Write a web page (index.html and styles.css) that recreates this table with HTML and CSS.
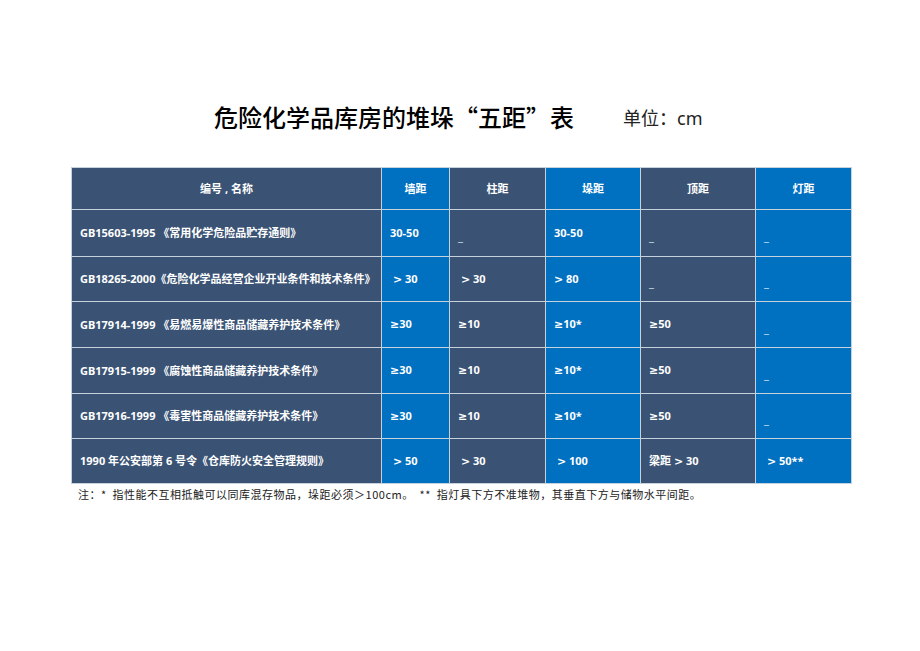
FILE: index.html
```html
<!DOCTYPE html>
<html lang="zh-CN">
<head>
<meta charset="utf-8">
<title>危险化学品库房的堆垛“五距”表</title>
<link rel="stylesheet" href="styles.css">
</head>
<body>
<div class="page">
  <div class="heading">
    <h1 class="title">危险化学品库房的堆垛“五距”表</h1>
    <span class="unit">单位：cm</span>
  </div>
  <table class="grid">
    <colgroup>
      <col class="c1"><col class="c2"><col class="c3"><col class="c4"><col class="c5"><col class="c6">
    </colgroup>
    <thead>
      <tr class="hrow">
        <th class="dark">编号 , 名称</th>
        <th class="blue">墙距</th>
        <th class="dark">柱距</th>
        <th class="blue">垛距</th>
        <th class="dark">顶距</th>
        <th class="blue">灯距</th>
      </tr>
    </thead>
    <tbody>
      <tr class="r47">
        <td class="dark">GB15603-1995 《常用化学危险品贮存通则》</td>
        <td class="blue">30-50</td>
        <td class="dark"><span class="dash">_</span></td>
        <td class="blue">30-50</td>
        <td class="dark"><span class="dash">_</span></td>
        <td class="blue"><span class="dash">_</span></td>
      </tr>
      <tr class="r45">
        <td class="dark">GB18265-2000《危险化学品经营企业开业条件和技术条件》</td>
        <td class="blue">&nbsp;<span class="op">&gt;</span> 30</td>
        <td class="dark">&nbsp;<span class="op">&gt;</span> 30</td>
        <td class="blue"><span class="op">&gt;</span> 80</td>
        <td class="dark"><span class="dash">_</span></td>
        <td class="blue"><span class="dash">_</span></td>
      </tr>
      <tr class="r46">
        <td class="dark">GB17914-1999 《易燃易爆性商品储藏养护技术条件》</td>
        <td class="blue"><span class="op">≥</span>30</td>
        <td class="dark"><span class="op">≥</span>10</td>
        <td class="blue"><span class="op">≥</span>10*</td>
        <td class="dark"><span class="op">≥</span>50</td>
        <td class="blue"><span class="dash">_</span></td>
      </tr>
      <tr class="r46">
        <td class="dark">GB17915-1999 《腐蚀性商品储藏养护技术条件》</td>
        <td class="blue"><span class="op">≥</span>30</td>
        <td class="dark"><span class="op">≥</span>10</td>
        <td class="blue"><span class="op">≥</span>10*</td>
        <td class="dark"><span class="op">≥</span>50</td>
        <td class="blue"><span class="dash">_</span></td>
      </tr>
      <tr class="r45">
        <td class="dark">GB17916-1999 《毒害性商品储藏养护技术条件》</td>
        <td class="blue"><span class="op">≥</span>30</td>
        <td class="dark"><span class="op">≥</span>10</td>
        <td class="blue"><span class="op">≥</span>10*</td>
        <td class="dark"><span class="op">≥</span>50</td>
        <td class="blue"><span class="dash">_</span></td>
      </tr>
      <tr class="r45">
        <td class="dark">1990 年公安部第 6 号令《仓库防火安全管理规则》</td>
        <td class="blue">&nbsp;<span class="op">&gt;</span> 50</td>
        <td class="dark">&nbsp;<span class="op">&gt;</span> 30</td>
        <td class="blue">&nbsp;<span class="op">&gt;</span> 100</td>
        <td class="dark">梁距 <span class="op">&gt;</span> 30</td>
        <td class="blue">&nbsp;<span class="op">&gt;</span> 50**</td>
      </tr>
    </tbody>
  </table>
  <p class="note">注：* &nbsp;指性能不互相抵触可以同库混存物品，垛距必须＞100cm。 &nbsp;** &nbsp;指灯具下方不准堆物，其垂直下方与储物水平间距。</p>
</div>
</body>
</html>
```

FILE: styles.css
```css
html, body {
  margin: 0;
  padding: 0;
  background: #ffffff;
}

.page {
  width: 781px;
  margin-left: 71px;
  padding-top: 102px;
  font-family: "Noto Sans", "Noto Sans CJK SC", sans-serif;
}

.heading {
  display: flex;
  align-items: center;
  height: 30px;
  padding-left: 143px;
  margin-bottom: 35px;
}

.title {
  margin: 0;
  font-family: "Noto Sans CJK SC", sans-serif;
  font-size: 24px;
  font-weight: 500;
  line-height: 30px;
  color: #000000;
}

.unit {
  margin-left: 49px;
  font-family: "Noto Sans", "Noto Sans CJK SC", sans-serif;
  font-size: 18px;
  line-height: 30px;
  color: #222222;
  padding-top: 2px;
}

.grid {
  width: 781px;
  border-collapse: collapse;
  table-layout: fixed;
  border: 1px solid #c6d1de;
}

.c1 { width: 310px; }
.c2 { width: 68px; }
.c3 { width: 96px; }
.c4 { width: 95px; }
.c5 { width: 115px; }
.c6 { width: 96px; }

.grid th,
.grid td {
  border: 1px solid #c6d1de;
  color: #ffffff;
  font-size: 11px;
  font-weight: 700;
  line-height: 14px;
  padding: 0 8px;
  vertical-align: middle;
  white-space: nowrap;
  overflow: hidden;
}

.grid th {
  text-align: center;
}

.grid td {
  text-align: left;
}

.grid td:first-child {
  padding-left: 8px;
  padding-right: 2px;
}

.hrow { height: 42px; }
.r47 { height: 47px; }
.r46 { height: 46px; }
.r45 { height: 45px; }

.dark { background: #3a5374; }
.blue { background: #0070c0; }

.op {
  font-family: "DejaVu Sans", sans-serif;
  font-size: 11px;
  font-weight: 700;
}

.dash {
  display: inline-block;
  font-weight: 400;
  color: #d8e2ee;
  transform: translateY(4px);
}

.note {
  margin: 2px 0 0 7px;
  font-family: "Noto Sans CJK SC", sans-serif;
  font-size: 11px;
  line-height: 16px;
  letter-spacing: 0.5px;
  color: #222222;
  white-space: nowrap;
}
```
